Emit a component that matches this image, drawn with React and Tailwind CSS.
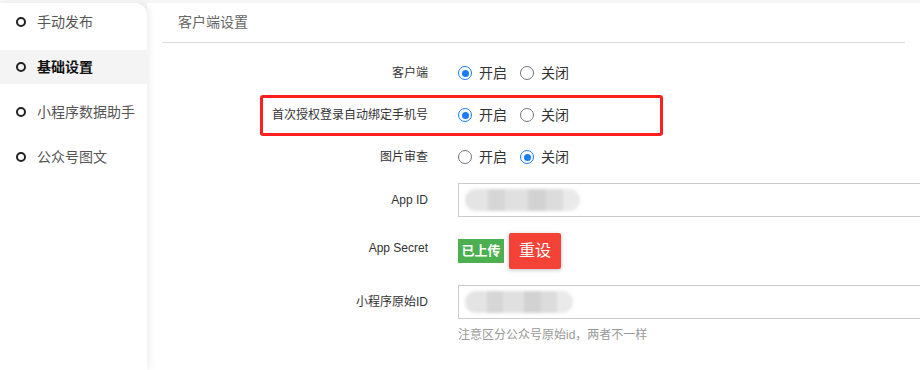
import React from 'react'

const font = { fontFamily: '"Liberation Sans", "Noto Sans CJK SC", sans-serif' }

const menu = [
  { label: '手动发布' },
  { label: '基础设置', active: true },
  { label: '小程序数据助手' },
  { label: '公众号图文' },
]

function Radio({ checked, label }) {
  return (
    <label className="flex items-center gap-[7px] text-[14px] text-[#333]">
      {checked ? (
        <span className="flex h-[14px] w-[14px] items-center justify-center rounded-full border-[1.5px] border-[#1a7cf5] bg-white">
          <span className="h-[7px] w-[7px] rounded-full bg-[#1a7cf5]" />
        </span>
      ) : (
        <span className="h-[14px] w-[14px] rounded-full border border-[#777] bg-white" />
      )}
      {label}
    </label>
  )
}

function RadioRow({ label, on, highlight }) {
  return (
    <div className="relative flex h-[42px] items-center">
      <div className="w-[281px] shrink-0 text-right text-[12px] text-[#333]">{label}</div>
      <div className="ml-[30px] flex items-center gap-[13px]">
        <Radio checked={on} label="开启" />
        <Radio checked={!on} label="关闭" />
      </div>
      {highlight && (
        <div className="pointer-events-none absolute left-[113px] top-[1px] h-[41px] w-[403px] rounded-[3px] border-[3px] border-[#ff1f1f]" />
      )}
    </div>
  )
}

function Blurred({ w }) {
  return (
    <div className="flex h-[22px] items-center overflow-hidden rounded-full blur-[1.5px]" style={{ width: w }}>
      <div className="h-full w-[20%] bg-[#e4e4e4]" />
      <div className="h-full w-[15%] bg-[#d6d6d6]" />
      <div className="h-full w-[20%] bg-[#e0e0e0]" />
      <div className="h-full w-[15%] bg-[#d2d2d2]" />
      <div className="h-full w-[15%] bg-[#dcdcdc]" />
      <div className="h-full w-[15%] bg-[#eaeaea]" />
    </div>
  )
}

export default function App() {
  return (
    <div className="flex h-[370px] w-[920px] overflow-hidden bg-[#f5f5f5] pt-[3px]" style={font}>
      <aside className="relative z-10 w-[147px] shrink-0 rounded-tr-[12px] bg-white pt-[2px] shadow-[3px_0_6px_rgba(0,0,0,0.06)]">
        <ul className="flex flex-col gap-[11px]">
          {menu.map((m) => (
            <li
              key={m.label}
              className={`flex h-[34px] items-center pl-[16px] text-[14px] ${
                m.active ? 'bg-[#f4f4f4] font-bold text-[#111]' : 'text-[#555]'
              }`}
            >
              <span className="h-[10px] w-[10px] rounded-full border-2 border-[#222]" />
              <span className="ml-[11px]">{m.label}</span>
            </li>
          ))}
        </ul>
      </aside>

      <main className="min-w-0 flex-1 overflow-hidden bg-white">
        <div className="mx-[15px] flex h-[40px] items-center border-b border-[#dddddd] pl-[16px] text-[14px] text-[#666]">
          客户端设置
        </div>

        <div className="pt-[9px]">
          <RadioRow label="客户端" on />
          <RadioRow label="首次授权登录自动绑定手机号" on highlight />
          <RadioRow label="图片审查" on={false} />

          <div className="mt-[5px] flex items-center">
            <div className="w-[281px] shrink-0 text-right text-[12px] text-[#333]">App ID</div>
            <div className="ml-[30px] flex h-[34px] w-[500px] shrink-0 items-center border border-[#cccccc] pl-[6px]">
              <Blurred w={115} />
            </div>
          </div>

          <div className="mt-[16px] flex items-center">
            <div className="mb-[7px] w-[281px] shrink-0 text-right text-[12px] text-[#333]">App Secret</div>
            <div className="ml-[30px] flex items-center gap-[5px]">
              <span className="flex h-[24px] w-[46px] items-center justify-center bg-[#4caf50] text-[13px] font-bold text-white">
                已上传
              </span>
              <button
                type="button"
                className="flex h-[36px] w-[52px] items-center justify-center rounded-[2px] bg-[#f44336] text-[16px] text-white shadow-[0_1px_4px_rgba(0,0,0,0.25)]"
              >
                重设
              </button>
            </div>
          </div>

          <div className="mt-[16px] flex items-center">
            <div className="w-[281px] shrink-0 text-right text-[12px] text-[#333]">小程序原始ID</div>
            <div className="ml-[30px] flex h-[34px] w-[500px] shrink-0 items-center border border-[#cccccc] pl-[6px]">
              <Blurred w={108} />
            </div>
          </div>
          <div className="ml-[311px] mt-[7px] text-[12px] text-[#999]">注意区分公众号原始id，两者不一样</div>
        </div>
      </main>
    </div>
  )
}
